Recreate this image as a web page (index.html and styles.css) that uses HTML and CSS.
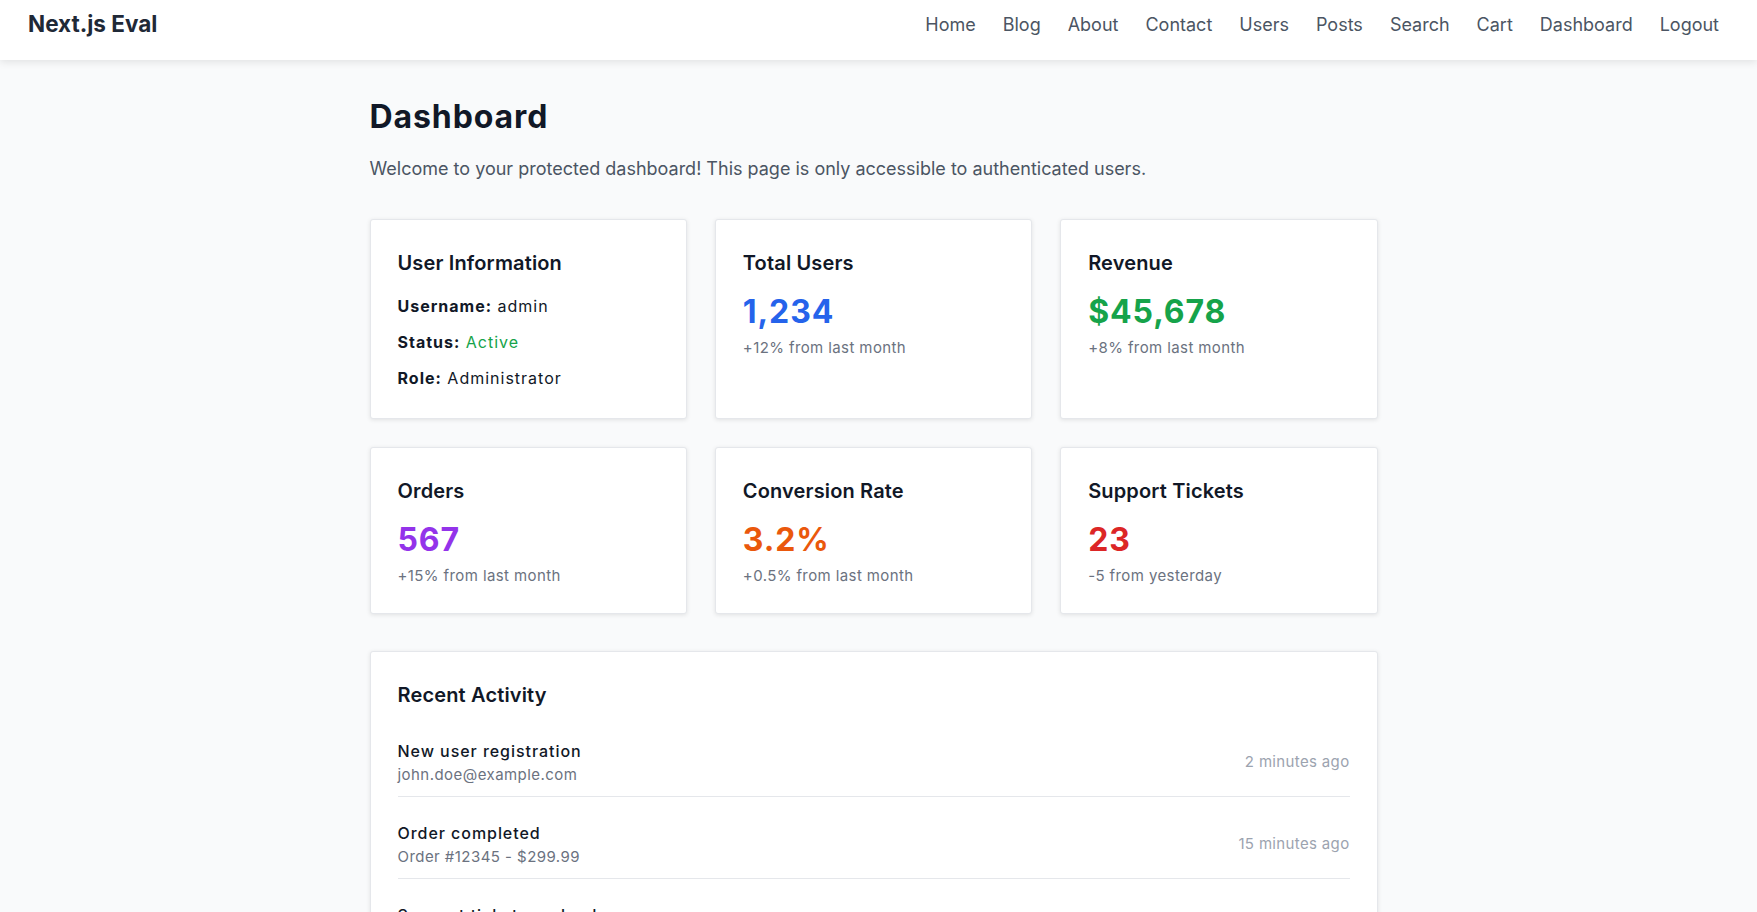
FILE: index.html
```html
<!DOCTYPE html>
<html lang="en">
<head>
<meta charset="utf-8">
<title>Dashboard - Next.js Eval</title>
<link rel="stylesheet" href="styles.css">
</head>
<body>
<header class="site-header">
  <div class="logo">Next.js Eval</div>
  <nav class="nav">
    <a href="#">Home</a>
    <a href="#">Blog</a>
    <a href="#">About</a>
    <a href="#">Contact</a>
    <a href="#">Users</a>
    <a href="#">Posts</a>
    <a href="#">Search</a>
    <a href="#">Cart</a>
    <a href="#">Dashboard</a>
    <a href="#">Logout</a>
  </nav>
</header>
<main class="main">
  <div class="container">
    <h1 class="page-title">Dashboard</h1>
    <p class="intro">Welcome to your protected dashboard! This page is only accessible to authenticated users.</p>

    <section class="grid">
      <div class="card">
        <h3 class="card-title info-title">User Information</h3>
        <p class="info-row"><strong>Username:</strong> admin</p>
        <p class="info-row"><strong>Status:</strong> <span class="green">Active</span></p>
        <p class="info-row"><strong>Role:</strong> Administrator</p>
      </div>
      <div class="card">
        <h3 class="card-title">Total Users</h3>
        <div class="stat blue">1,234</div>
        <p class="stat-sub">+12% from last month</p>
      </div>
      <div class="card">
        <h3 class="card-title">Revenue</h3>
        <div class="stat green">$45,678</div>
        <p class="stat-sub">+8% from last month</p>
      </div>
      <div class="card">
        <h3 class="card-title">Orders</h3>
        <div class="stat purple">567</div>
        <p class="stat-sub">+15% from last month</p>
      </div>
      <div class="card">
        <h3 class="card-title">Conversion Rate</h3>
        <div class="stat orange">3.2%</div>
        <p class="stat-sub">+0.5% from last month</p>
      </div>
      <div class="card">
        <h3 class="card-title">Support Tickets</h3>
        <div class="stat red">23</div>
        <p class="stat-sub">-5 from yesterday</p>
      </div>
    </section>

    <section class="card activity">
      <h3 class="card-title activity-title">Recent Activity</h3>
      <div class="activity-item">
        <div class="activity-main">
          <p class="activity-name">New user registration</p>
          <p class="activity-sub">john.doe@example.com</p>
        </div>
        <span class="activity-time">2 minutes ago</span>
      </div>
      <div class="activity-item">
        <div class="activity-main">
          <p class="activity-name">Order completed</p>
          <p class="activity-sub">Order #12345 - $299.99</p>
        </div>
        <span class="activity-time">15 minutes ago</span>
      </div>
      <div class="activity-item">
        <div class="activity-main">
          <p class="activity-name">Support ticket resolved</p>
          <p class="activity-sub">Ticket #789</p>
        </div>
        <span class="activity-time">1 hour ago</span>
      </div>
    </section>
  </div>
</main>
</body>
</html>
```

FILE: styles.css
```css
html {
  scrollbar-width: none;
}
html::-webkit-scrollbar {
  display: none;
}
body {
  margin: 0;
  background: #f9fafb;
  font-family: Inter, "Noto Sans", "Liberation Sans", sans-serif;
  color: #111827;
}
p, h1, h3 {
  margin: 0;
}

.site-header {
  background: #ffffff;
  box-shadow: 0 2px 8px rgba(0, 0, 0, 0.1);
  display: flex;
  align-items: flex-start;
  justify-content: space-between;
  padding: 10px 38px 22px 28px;
  position: relative;
}
.logo {
  font-size: 22.5px;
  font-weight: 700;
  color: #1f2937;
  line-height: 28px;
}
.nav {
  display: flex;
  gap: 27px;
  padding-top: 1px;
}
.nav a {
  color: #4b5563;
  text-decoration: none;
  font-size: 18px;
  line-height: 27px;
}

.main {
  padding: 37px 10px 40px 0;
}
.container {
  max-width: 1008px;
  margin: 0 auto;
}
.page-title {
  font-size: 32px;
  line-height: 40px;
  font-weight: 700;
  letter-spacing: 0.9px;
  color: #111827;
  margin-bottom: 18px;
}
.intro {
  font-size: 18px;
  line-height: 28px;
  color: #4b5563;
  margin-bottom: 36px;
}

.grid {
  display: grid;
  grid-template-columns: repeat(3, 1fr);
  gap: 28px;
  margin-bottom: 37px;
}
.card {
  background: #ffffff;
  border: 1px solid #e5e7eb;
  border-radius: 3px;
  box-shadow: 0 1px 4px rgba(0, 0, 0, 0.1);
  padding: 29px 27px 27px;
}
.card-title {
  font-size: 20px;
  line-height: 28px;
  font-weight: 600;
  letter-spacing: 0.15px;
  color: #111827;
  margin-bottom: 15px;
}
.info-title {
  margin-bottom: 17px;
}
.info-row {
  font-size: 16px;
  line-height: 24px;
  letter-spacing: 1px;
  color: #111827;
  margin-bottom: 12px;
}
.info-row:last-child {
  margin-bottom: 1px;
}
.info-row strong {
  font-weight: 700;
}
.stat {
  font-size: 32px;
  line-height: 40px;
  font-weight: 700;
  letter-spacing: 0.9px;
  margin-bottom: 6px;
}
.stat-sub {
  font-size: 15px;
  line-height: 20px;
  letter-spacing: 0.4px;
  color: #6b7280;
}
.blue { color: #2563eb; }
.green { color: #16a34a; }
.purple { color: #9333ea; }
.orange { color: #ea580c; }
.red { color: #dc2626; }

.activity-title {
  margin-bottom: 18px;
}
.activity-item {
  display: flex;
  align-items: center;
  justify-content: space-between;
  padding: 12px 0 11px;
  border-bottom: 1px solid #e5e7eb;
  margin-bottom: 12px;
}
.activity-item:last-child {
  border-bottom: none;
  margin-bottom: 0;
}
.activity-name {
  font-size: 16px;
  line-height: 24px;
  font-weight: 500;
  letter-spacing: 0.95px;
  color: #111827;
}
.activity-sub {
  font-size: 15px;
  line-height: 20px;
  letter-spacing: 0.45px;
  color: #6b7280;
  margin-top: 2px;
}
.activity-time {
  font-size: 15px;
  line-height: 20px;
  letter-spacing: 0.35px;
  color: #9ca3af;
}
```
